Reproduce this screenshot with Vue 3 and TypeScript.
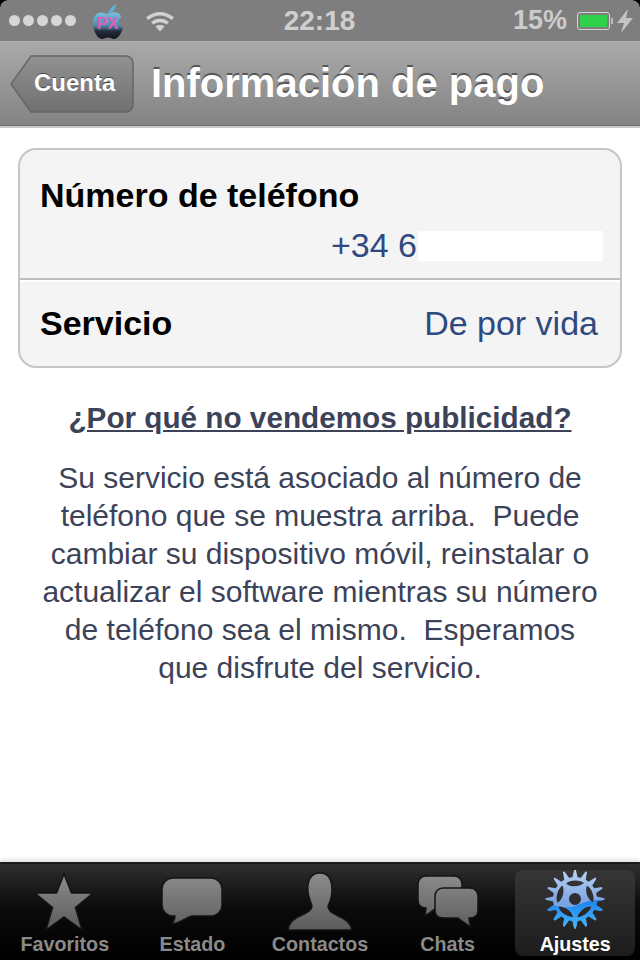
<script setup lang="ts">
import { computed } from 'vue'

// Pestañas de la barra inferior
const tabs = [
  { label: 'Favoritos', paths: ['M35 4L42.5 23H64L46.5 37.5L53 60L35 47L17 60L23.5 37.5L6 23H27.5Z'] },
  { label: 'Estado', paths: ['M17 8H55C61 8 66 13 66 19V35C66 41 61 46 55 46H36C30 48 24 52 16 54.500C18 51 19 48 19 46H17C11 46 6 41 6 35V19C6 13 11 8 17 8Z'] },
  { label: 'Contactos', paths: ['M36 3C26 3 23 12 24 22C24.500 28 27 32 28 36C28 40 24 42 18 45C10 48 5 52 4 60H68C67 54 62 49 54 46C48 43 44 41 44 36C46 32 48 27 48 20C48 10 45 3 36 3Z'] },
  {
    label: 'Chats',
    paths: [
      'M14 6H42C47 6 50 10 50 14V30C50 35 47 38 42 38H24C20 41 17 44 12 46C14 43 14 41 14 38C9 38 6 35 6 30V14C6 10 9 6 14 6Z',
      'M31 18H58C63 18 66 22 66 26V40C66 45 63 48 58 48H57C57 51 58 54 59 57C54 54 50 51 46 48H31C26 48 23 45 23 40V26C23 22 26 18 31 18Z',
    ],
  },
]

const aboutLines = [
  'Su servicio está asociado al número de',
  'teléfono que se muestra arriba.\u00a0 Puede',
  'cambiar su dispositivo móvil, reinstalar o',
  'actualizar el software mientras su número',
  'de teléfono sea el mismo.\u00a0 Esperamos',
  'que disfrute del servicio.',
]

// Engranaje de Ajustes: dientes, cinco huecos curvos y el agujero central
const gearPath = computed(() => {
  const teeth = 16
  const step = (Math.PI * 2) / teeth
  const pts: string[] = []
  const polar = (r: number, ang: number) => `${(r * Math.cos(ang)).toFixed(2)} ${(r * Math.sin(ang)).toFixed(2)}`
  for (let i = 0; i < teeth; i++) {
    const a = i * step - Math.PI / 2
    pts.push(polar(22, a - step * 0.3), polar(29.5, a - step * 0.07), polar(29.5, a + step * 0.07), polar(22, a + step * 0.3))
  }
  const blade = [-9, -15.5, -5, -19.5, 5, -19.5, 9, -16, 5, -12.5, -4, -11, -9, -15.5]
  const holes: string[] = []
  for (let k = 0; k < 5; k++) {
    const t = (k * 2 * Math.PI) / 5
    const p: string[] = []
    for (let i = 0; i < blade.length; i += 2) {
      const x = blade[i] * Math.cos(t) - blade[i + 1] * Math.sin(t)
      const y = blade[i] * Math.sin(t) + blade[i + 1] * Math.cos(t)
      p.push(`${x.toFixed(2)} ${y.toFixed(2)}`)
    }
    holes.push(`M${p[0]}C${p[1]} ${p[2]} ${p[3]}C${p[4]} ${p[5]} ${p[6]}Z`)
  }
  const center = 'M0 -6A6 6 0 1 0 0 6A6 6 0 1 0 0 -6Z'
  return `M${pts.join('L')}Z${holes.join('')}${center}`
})
</script>

<template>
  <div class="screen">
    <span class="corner corner-left"></span>
    <span class="corner corner-right"></span>

    <!-- Barra de estado -->
    <header class="status">
      <div class="status-left">
        <div class="signal"><i v-for="n in 5" :key="n"></i></div>
        <svg class="apple" viewBox="0 0 32 36" width="32" height="36">
          <defs>
            <linearGradient id="appleFill" x1="0" y1="0" x2="0" y2="1">
              <stop offset="0" stop-color="#7cc0dc" />
              <stop offset="0.5" stop-color="#4f8cae" />
              <stop offset="0.72" stop-color="#232b3a" />
              <stop offset="1" stop-color="#10141c" />
            </linearGradient>
          </defs>
          <path d="M16 10C18 5 21 3 24 1C24.500 5 21 9 17 10.500Z" fill="#5fb0d6" />
          <path d="M16 11C19 9 23 8.500 26 10C28 11 29 13 29.500 14C26 16 25.500 22 31 25C29.500 30 26 36 22 36C19.500 36 18.500 34.500 16 34.500C13.500 34.500 12 36 10 36C5 36 1 27 1 20C1 13 5 9.500 9 9.500C12 9.500 14 11 16 11Z" fill="url(#appleFill)" />
          <text x="15.500" y="26" class="apple-mark">PX</text>
        </svg>
        <svg class="wifi" viewBox="0 0 30 24" width="30" height="24">
          <path d="M1 8.500C9 1 21 1 29 8.500L26.500 11C20 5 10 5 3.500 11Z" />
          <path d="M6 13C11 8.500 19 8.500 24 13L21.500 15.500C17.500 12.500 12.500 12.500 8.500 15.500Z" />
          <path d="M10.500 17.500C13 15.500 17 15.500 19.500 17.500L15 22.500Z" />
        </svg>
      </div>
      <div class="time">22:18</div>
      <div class="status-right">
        <span class="percent">15%</span>
        <div class="battery"><div class="battery-level"></div></div>
        <svg class="bolt" viewBox="0 0 18 24" width="18" height="24">
          <path d="M12 0L1 14H8L5 24L17 9H10Z" />
        </svg>
      </div>
    </header>

    <!-- Barra de navegación -->
    <nav class="navbar">
      <button class="back">
        <svg class="back-shape" viewBox="0 0 124 58" width="124" height="58">
          <defs>
            <linearGradient id="backFill" x1="0" y1="0" x2="0" y2="1">
              <stop offset="0" stop-color="#919191" />
              <stop offset="1" stop-color="#707070" />
            </linearGradient>
          </defs>
          <path d="M21 1H116C120 1 123 4 123 8V50C123 54 120 57 116 57H21L1 29Z" fill="url(#backFill)" stroke="#666" stroke-width="1.500" />
        </svg>
        <span class="back-label">Cuenta</span>
      </button>
      <h1 class="title">Información de pago</h1>
    </nav>

    <!-- Contenido -->
    <main class="content">
      <section class="group">
        <div class="row row-phone">
          <div class="row-label">Número de teléfono</div>
          <div class="phone">
            <span class="row-value">+34 6</span>
            <span class="redacted"></span>
          </div>
        </div>
        <div class="row row-service">
          <div class="row-label">Servicio</div>
          <div class="row-value">De por vida</div>
        </div>
      </section>

      <a class="why">¿Por qué no vendemos publicidad?</a>
      <div class="about">
        <div v-for="line in aboutLines" :key="line">{{ line }}</div>
      </div>
    </main>

    <!-- Barra de pestañas -->
    <footer class="tabbar">
      <div v-for="tab in tabs" :key="tab.label" class="tab">
        <svg class="tab-icon" viewBox="0 0 72 62" width="72" height="62">
          <defs>
            <linearGradient :id="'fill' + tab.label" x1="0" y1="0" x2="0" y2="62" gradientUnits="userSpaceOnUse">
              <stop offset="0" stop-color="#8f8f8f" />
              <stop offset="1" stop-color="#5a5a5a" />
            </linearGradient>
          </defs>
          <path
            v-for="p in tab.paths"
            :key="p"
            :d="p"
            :fill="'url(#fill' + tab.label + ')'"
            stroke="#141414"
            stroke-width="1.500"
          />
        </svg>
        <span class="tab-label">{{ tab.label }}</span>
      </div>
      <div class="tab tab-active">
        <svg class="tab-icon" viewBox="-36 -29 72 62" width="72" height="62">
          <defs>
            <linearGradient id="gearTop" x1="0" y1="-30" x2="0" y2="4" gradientUnits="userSpaceOnUse">
              <stop offset="0" stop-color="#bdd4f6" />
              <stop offset="1" stop-color="#7aa3e2" />
            </linearGradient>
            <linearGradient id="gearBottom" x1="0" y1="0" x2="0" y2="30" gradientUnits="userSpaceOnUse">
              <stop offset="0" stop-color="#1a80ee" />
              <stop offset="1" stop-color="#42bcff" />
            </linearGradient>
            <clipPath id="gearSplit">
              <path d="M-34 8C-24 3 -14 10 -4 8C6 6 14 -2 34 2V34H-34Z" />
            </clipPath>
          </defs>
          <path :d="gearPath" fill="url(#gearTop)" fill-rule="evenodd" />
          <path :d="gearPath" fill="url(#gearBottom)" fill-rule="evenodd" clip-path="url(#gearSplit)" />
        </svg>
        <span class="tab-label">Ajustes</span>
      </div>
    </footer>
  </div>
</template>

<style>
html,
body {
  margin: 0;
  background: #fff;
}
</style>

<style scoped>
.screen {
  position: relative;
  width: 640px;
  height: 960px;
  display: flex;
  flex-direction: column;
  overflow: hidden;
  background: #fff;
  font-family: "Liberation Sans", Arial, sans-serif;
}

.corner {
  position: absolute;
  top: 0;
  width: 8px;
  height: 8px;
  z-index: 2;
}
.corner-left {
  left: 0;
  background: radial-gradient(circle at 8px 8px, transparent 7.500px, #000 8px);
}
.corner-right {
  right: 0;
  background: radial-gradient(circle at 0 8px, transparent 7.500px, #000 8px);
}

/* Barra de estado */
.status {
  height: 41px;
  flex: none;
  display: grid;
  grid-template-columns: 1fr auto 1fr;
  align-items: center;
  padding: 0 6px 0 9px;
  background: #7e7e7e;
}
.status-left {
  display: flex;
  align-items: center;
}
.signal {
  display: flex;
  gap: 3px;
}
.signal i {
  width: 11px;
  height: 11px;
  border-radius: 50%;
  background: #d6d6d6;
}
.apple {
  margin-left: 16px;
}
.apple-mark {
  font-size: 16px;
  font-weight: 700;
  fill: #d860b8;
  text-anchor: middle;
  font-family: "Liberation Sans", Arial, sans-serif;
}
.wifi {
  margin-left: 21px;
  fill: #d2d2d2;
}
.time {
  font-size: 28px;
  font-weight: 700;
  color: #cfcfcf;
  margin-right: 4px;
}
.status-right {
  display: flex;
  align-items: center;
  justify-content: flex-end;
}
.percent {
  font-size: 27px;
  font-weight: 700;
  color: #cccccc;
}
.battery {
  position: relative;
  width: 33px;
  height: 18px;
  margin-left: 10px;
  box-sizing: border-box;
  border: 1px solid #d4d4d4;
  border-radius: 3px;
  padding: 2px;
}
.battery::after {
  content: "";
  position: absolute;
  right: -4px;
  top: 5px;
  width: 2px;
  height: 6px;
  background: #bcbcbc;
}
.battery-level {
  height: 100%;
  background: #30d14a;
}
.bolt {
  margin-left: 6px;
  fill: #c4c4c4;
}

/* Barra de navegación */
.navbar {
  height: 85px;
  flex: none;
  display: flex;
  align-items: center;
  padding-left: 10px;
  border-bottom: 2px solid #c9c9c9;
  box-shadow: inset 0 -1px 0 #6f6f6f;
  background: linear-gradient(#aaaaaa, #838383);
}
.back {
  position: relative;
  width: 124px;
  height: 58px;
  margin: 0;
  padding: 0 0 2px 24px;
  border: 0;
  background: none;
  font-family: inherit;
  text-align: left;
}
.back-shape {
  position: absolute;
  left: 0;
  top: 0;
}
.back-label {
  position: relative;
  font-size: 24px;
  font-weight: 700;
  color: #fff;
  text-shadow: 0 -1px 0 #444;
}
.title {
  margin: 0 0 0 17px;
  font-size: 40px;
  font-weight: 700;
  color: #fff;
  text-shadow: 0 -2px 0 #555;
  white-space: nowrap;
}

/* Contenido */
.content {
  flex: 1;
  display: flex;
  flex-direction: column;
  align-items: center;
  padding: 20px 18px 0;
}
.group {
  width: 100%;
  box-sizing: border-box;
  border: 2px solid #c6c6c6;
  border-radius: 18px;
  background: #f4f4f4;
}
.row-phone {
  height: 130px;
  box-sizing: border-box;
  padding: 26px 17px 0 20px;
  border-bottom: 2px solid #bdbdbd;
  box-shadow: 0 2px 0 #fff;
}
.row-service {
  height: 86px;
  display: flex;
  align-items: center;
  justify-content: space-between;
  padding: 0 22px 0 20px;
}
.row-label {
  font-size: 34px;
  font-weight: 700;
  color: #000;
}
.phone {
  display: flex;
  justify-content: flex-end;
  align-items: center;
  margin-top: 11px;
}
.row-value {
  font-size: 34px;
  color: #2f4a80;
}
.redacted {
  width: 185px;
  height: 30px;
  margin-left: 1px;
  background: #fff;
}
.why {
  margin-top: 33px;
  font-size: 29.7px;
  font-weight: 700;
  color: #3c4358;
  text-decoration: underline;
}
.about {
  margin-top: 24px;
  font-size: 30px;
  line-height: 38px;
  color: #3c4358;
  text-align: center;
  white-space: nowrap;
}

/* Barra de pestañas */
.tabbar {
  height: 98px;
  flex: none;
  box-sizing: border-box;
  display: grid;
  grid-template-columns: repeat(5, 1fr);
  gap: 8px;
  padding: 6px 5px 4px;
  border-top: 2px solid #1a1a1a;
  box-shadow: 0 -3px 3px #e6e6e6;
  background: linear-gradient(#2e2e2e, #0b0b0b 45%, #000);
}
.tab {
  display: flex;
  flex-direction: column;
  align-items: center;
  min-width: 0;
  border-radius: 8px;
}
.tab-icon {
  flex: none;
}
.tab-active {
  background: linear-gradient(#363636, #1c1c1c);
}
.tab-label {
  margin-top: 1px;
  font-size: 19.7px;
  font-weight: 700;
  color: #8a8a8a;
  white-space: nowrap;
}
.tab-active .tab-label {
  color: #fff;
}
</style>
